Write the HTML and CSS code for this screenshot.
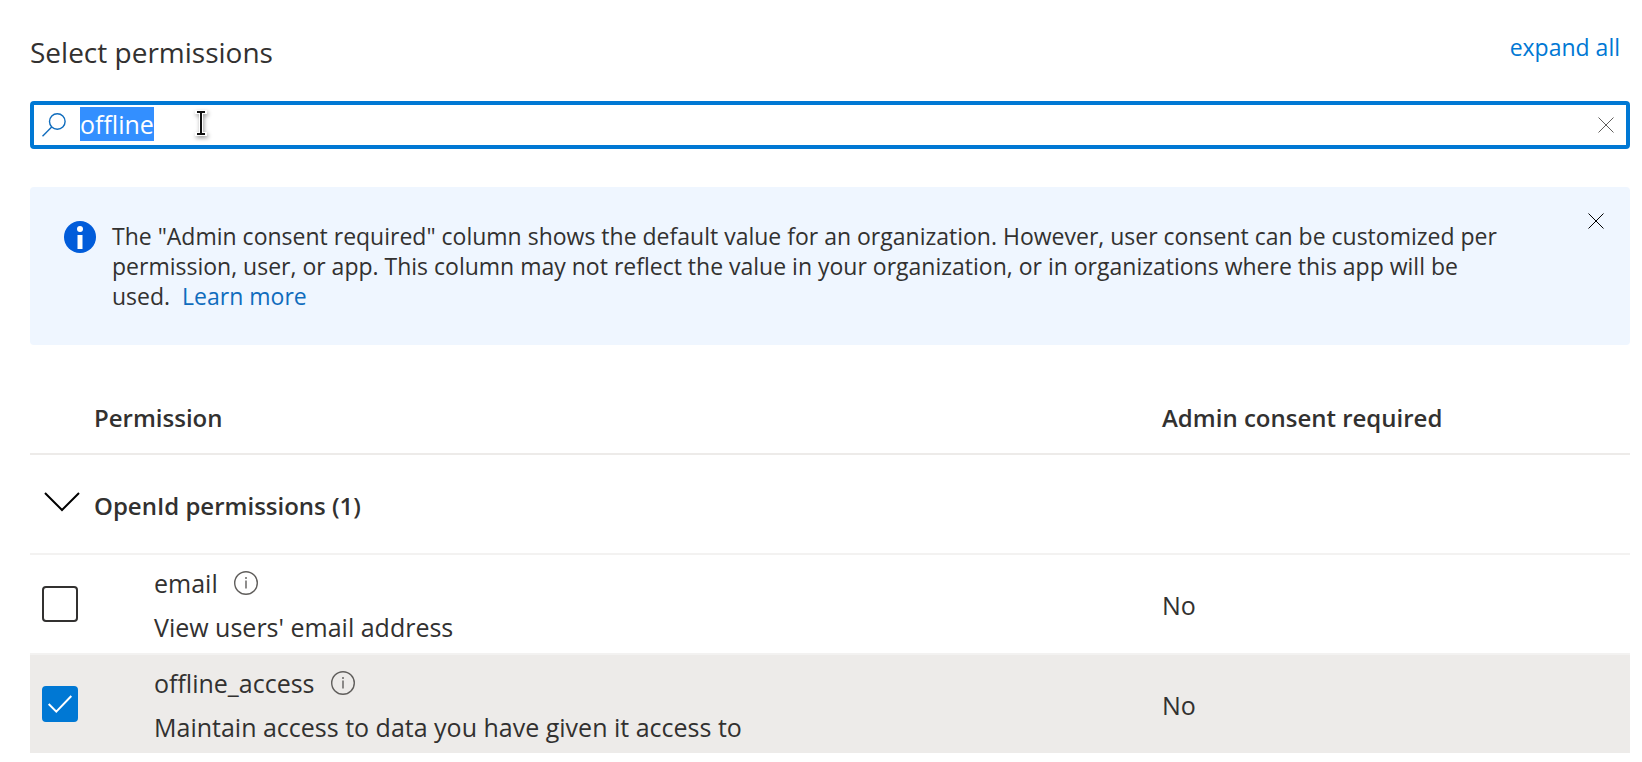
FILE: index.html
```html
<!DOCTYPE html>
<html lang="en">
<head>
<meta charset="utf-8">
<meta name="viewport" content="width=device-width, initial-scale=1">
<title>Select permissions</title>
<link rel="stylesheet" href="styles.css">
</head>
<body>
<main class="panel">
  <header class="panel-header">
    <h1 class="panel-title">Select permissions</h1>
    <a class="expand-link" href="#permissions">expand all</a>
  </header>

  <form class="search" role="search">
    <svg class="search-icon" viewBox="0 0 24 24" aria-hidden="true"><circle cx="15.3" cy="8.5" r="7.8"/><path d="M9.7 14.1 0.5 23.3"/></svg>
    <input class="search-input" id="search" type="text" value="offline" aria-label="Search permissions" autocomplete="off" spellcheck="false" autofocus>
    <button class="icon-button clear-button" type="button" aria-label="Clear search">
      <svg class="cross" viewBox="0 0 16 16" aria-hidden="true"><path d="M0.5 0.5 15.5 15.5M15.5 0.5 0.5 15.5"/></svg>
    </button>
    <svg class="pointer" viewBox="0 0 12 28" aria-hidden="true"><path class="pointer-halo" d="M2 3H10M6 3V25M2 25H10"/><path class="pointer-line" d="M2 3H10M6 3V25M2 25H10"/></svg>
  </form>

  <section class="notice" aria-label="Information">
    <svg class="notice-icon" viewBox="0 0 32 32" aria-hidden="true"><circle class="notice-disc" cx="16" cy="16" r="16"/><circle class="notice-mark" cx="16" cy="8" r="3"/><path class="notice-mark" d="M13.5 14h5V28h-5z"/></svg>
    <p class="notice-text">The "Admin consent required" column shows the default value for an organization. However, user consent can be customized per permission, user, or app. This column may not reflect the value in your organization, or in organizations where this app will be used. <a class="notice-link" href="#learn">Learn more</a></p>
    <button class="icon-button dismiss-button" type="button" aria-label="Dismiss">
      <svg class="cross" viewBox="0 0 16 16" aria-hidden="true"><path d="M0.5 0.5 15.5 15.5M15.5 0.5 0.5 15.5"/></svg>
    </button>
  </section>

  <table class="permissions" id="permissions">
    <colgroup><col class="col-select"><col><col class="col-consent"></colgroup>
    <thead>
      <tr class="head-row">
        <td></td>
        <th scope="col">Permission</th>
        <th scope="col">Admin consent required</th>
      </tr>
    </thead>
    <tbody>
      <tr class="group-row">
        <td class="toggle-cell">
          <button class="icon-button" type="button" aria-label="Collapse OpenId permissions" aria-expanded="true">
            <svg class="chevron" viewBox="0 0 36 20" aria-hidden="true"><path d="M1 1 18 18 35 1"/></svg>
          </button>
        </td>
        <th scope="rowgroup" colspan="2">OpenId permissions (1)</th>
      </tr>
      <tr class="item-row">
        <td class="select-cell"><input class="check" type="checkbox" id="perm-email"></td>
        <td class="name-cell">
          <div class="name"><label for="perm-email">email</label>
            <svg class="info" viewBox="0 0 24 24" aria-hidden="true"><circle cx="12" cy="12" r="11.3"/><path d="M12 9.5V17.5M12 6V8"/></svg>
          </div>
          <div class="description">View users' email address</div>
        </td>
        <td>No</td>
      </tr>
      <tr class="item-row selected">
        <td class="select-cell"><input class="check" type="checkbox" id="perm-offline" checked></td>
        <td class="name-cell">
          <div class="name"><label for="perm-offline">offline_access</label>
            <svg class="info" viewBox="0 0 24 24" aria-hidden="true"><circle cx="12" cy="12" r="11.3"/><path d="M12 9.5V17.5M12 6V8"/></svg>
          </div>
          <div class="description">Maintain access to data you have given it access to</div>
        </td>
        <td>No</td>
      </tr>
    </tbody>
  </table>
</main>
<script src="script.js"></script>
</body>
</html>
```
FILE: styles.css
```css
* {
  box-sizing: border-box;
}

body {
  margin: 0;
  background: #fff;
  color: #323130;
  font-family: "Segoe UI", "Open Sans", "Noto Sans", sans-serif;
  font-size: 25px;
  line-height: 34px;
}

svg {
  display: block;
  flex: none;
  fill: none;
  stroke: currentColor;
}

a {
  color: #0078d4;
  text-decoration: none;
}

.panel {
  padding: 31px 12px 0 30px;
}

.panel-header {
  display: flex;
  justify-content: space-between;
  align-items: flex-start;
  height: 70px;
  padding-right: 10px;
}

.panel-title {
  margin: 0;
  font-size: 28px;
  font-weight: 400;
  line-height: 42px;
}

.expand-link {
  font-size: 23px;
  line-height: 32px;
}

.icon-button {
  display: flex;
  flex: none;
  padding: 0;
  border: 0;
  background: none;
  color: #000;
}

.cross {
  width: 16px;
  height: 16px;
}

.search {
  position: relative;
  display: flex;
  align-items: center;
  gap: 14px;
  height: 48px;
  padding: 0 12px 0 8px;
  border: 4px solid #0078d4;
  border-radius: 4px;
}

.search-icon {
  width: 24px;
  height: 24px;
  color: #0f6cbd;
  stroke-width: 1.4;
}

.search-input {
  flex: 1;
  min-width: 0;
  height: 38px;
  padding: 0 0 2px;
  border: 0;
  outline: 0;
  background: none;
  color: inherit;
  font: inherit;
}

.search-input::selection {
  background: #338fff;
  color: #fff;
}

.clear-button {
  color: #605e5c;
}

.pointer {
  position: absolute;
  top: 4px;
  left: 161px;
  width: 12px;
  height: 28px;
  overflow: visible;
  filter: drop-shadow(1px 2px 2px rgba(0, 0, 0, 0.4));
}

.pointer-halo {
  stroke: #fff;
  stroke-width: 4;
  stroke-linecap: square;
}

.pointer-line {
  stroke: #111;
  stroke-width: 2;
}

.notice {
  display: flex;
  align-items: flex-start;
  margin-top: 38px;
  padding: 34px 26px 34px 34px;
  border-radius: 4px;
  background: #eff6ff;
}

.notice-icon {
  width: 32px;
  height: 32px;
  stroke: none;
}

.notice-disc {
  fill: #015cda;
}

.notice-mark {
  fill: #fff;
}

.notice-text {
  flex: 1;
  margin: 0 84px 0 16px;
  font-size: 23px;
  line-height: 30px;
}

.notice-link {
  margin-left: 6px;
  color: #0f6cbd;
}

.dismiss-button {
  margin-top: -8px;
}

.permissions {
  width: 100%;
  margin-top: 38px;
  border-collapse: separate;
  border-spacing: 0;
  table-layout: fixed;
}

.col-select {
  width: 64px;
}

.col-consent {
  width: 468px;
}

.permissions td,
.permissions th {
  padding: 0;
  border-bottom: 2px solid #f3f2f1;
  text-align: left;
  vertical-align: middle;
}

.permissions th {
  font-size: 24px;
  font-weight: 600;
}

.permissions .head-row > * {
  height: 72px;
  border-bottom-color: #edebe9;
}

.permissions .group-row > * {
  height: 100px;
  padding-top: 4px;
}

.permissions .group-row .toggle-cell {
  padding: 0 0 4px 14px;
}

.chevron {
  width: 36px;
  height: 20px;
  stroke-width: 2;
}

.permissions .item-row > td {
  height: 100px;
  padding-top: 2px;
}

.permissions .item-row:last-child > td {
  height: 98px;
  border-bottom: 0;
}

.permissions .item-row > .select-cell {
  padding: 0 0 0 12px;
}

.permissions .item-row > .name-cell {
  padding: 2px 0 0 60px;
}

.selected {
  background: #edebe9;
}

.name {
  display: flex;
  align-items: center;
  gap: 16px;
  height: 44px;
}

.description {
  height: 44px;
  line-height: 44px;
}

.info {
  width: 24px;
  height: 24px;
  color: #605e5c;
  stroke-width: 1.4;
}

.check {
  display: block;
  width: 36px;
  height: 36px;
  margin: 0;
  border: 2px solid #323130;
  border-radius: 4px;
  background: #fff;
  appearance: none;
}

.check:checked {
  border-color: #0078d4;
  background: #0078d4 url("data:image/svg+xml,%3Csvg xmlns='http://www.w3.org/2000/svg' viewBox='0 0 32 32' fill='none' stroke='white' stroke-width='2'%3E%3Cpath d='M4.7 16 12.3 23.6 27.3 8'/%3E%3C/svg%3E") center / 32px 32px no-repeat;
}
```
FILE: script.js
```js
const search = document.getElementById("search");
search.focus();
search.select();

document.querySelector(".clear-button").addEventListener("click", () => {
  search.value = "";
  search.focus();
});
```
